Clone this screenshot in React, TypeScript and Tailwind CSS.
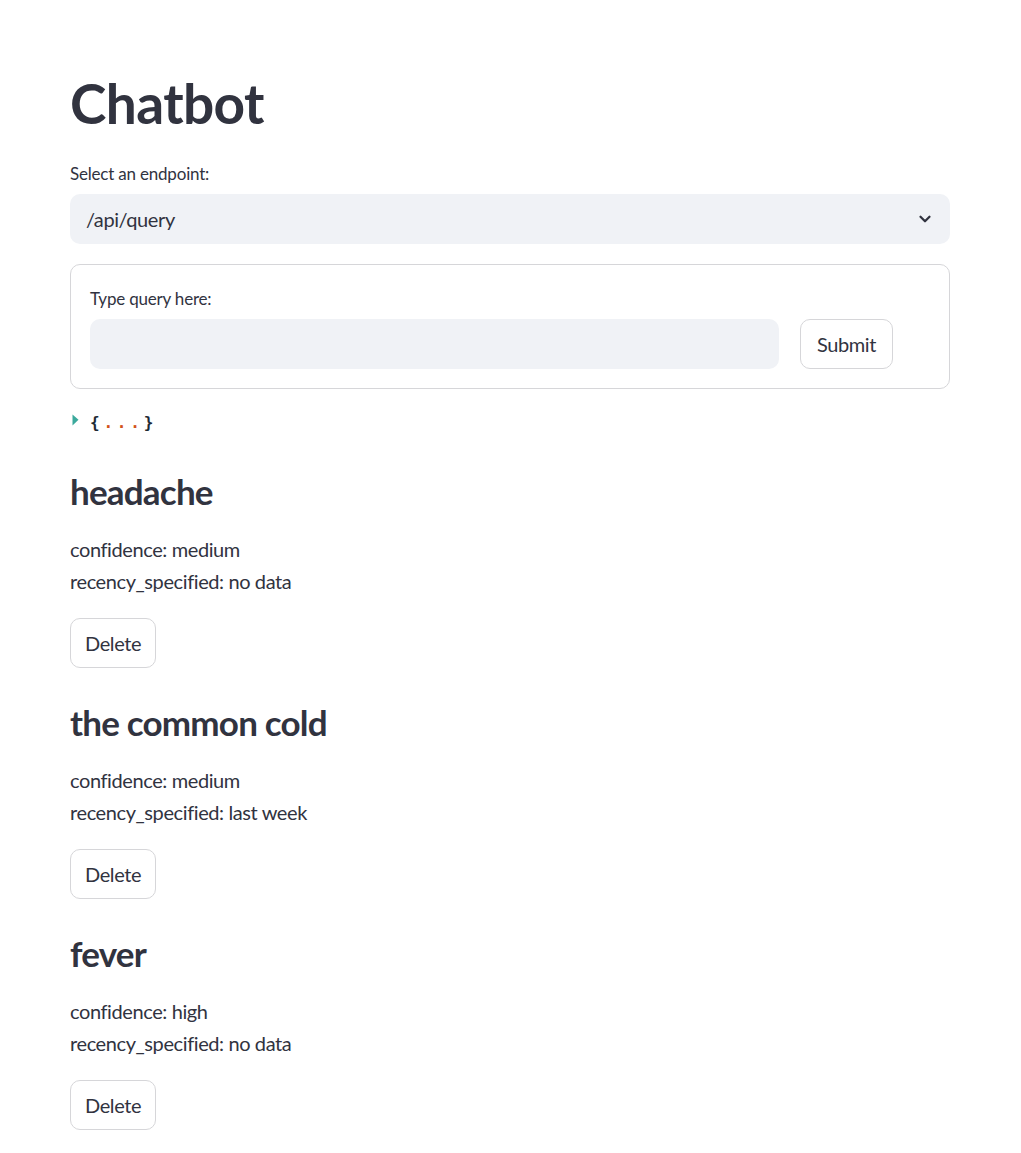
import { ChevronDown } from 'lucide-react';

interface Condition {
    name: string;
    confidence: string;
    recency: string;
}

const conditions: Condition[] = [
    { name: 'headache', confidence: 'medium', recency: 'no data' },
    { name: 'the common cold', confidence: 'medium', recency: 'last week' },
    { name: 'fever', confidence: 'high', recency: 'no data' },
];

const font = { fontFamily: 'Lato, "Noto Sans", sans-serif' };

function SmallButton({ label, wide }: { label: string; wide?: boolean }) {
    return (
        <button
            className={`h-[50px] ${wide ? 'px-[16px]' : 'px-[14px]'} bg-white border border-[#d6d6d9] rounded-[10px] text-[20px] tracking-[-0.4px] text-[#31333f] leading-none`}
        >
            {label}
        </button>
    );
}

export default function App() {
    return (
        <div className="min-h-screen bg-white text-[#31333f]" style={font}>
            <div className="w-[880px] ml-[70px] pt-[70px] pb-[23px]">
                {/* Title */}
                <h1 className="text-[55px] font-bold leading-[66px] tracking-[-0.6px]">Chatbot</h1>

                {/* Endpoint select */}
                <div className="mt-[26px]">
                    <label className="block text-[17px] leading-[24px] mb-[8px] tracking-[-0.2px]">Select an endpoint:</label>
                    <div className="h-[50px] bg-[#f0f2f6] rounded-[10px] flex items-center justify-between pl-[16px] pr-[16px]">
                        <span className="text-[20px] tracking-[-0.4px]">/api/query</span>
                        <ChevronDown className="h-[18px] w-[18px] text-[#31333f]" strokeWidth={3} />
                    </div>
                </div>

                {/* Query form */}
                <div className="mt-[20px] border border-[#d6d6d9] rounded-[10px] px-[19px] pt-[22px] pb-[19px]">
                    <div className="flex items-end gap-[21px]">
                        <div className="flex-1">
                            <label className="block text-[17px] leading-[24px] mb-[8px] tracking-[-0.2px]">Type query here:</label>
                            <div className="h-[50px] bg-[#f0f2f6] rounded-[10px]" />
                        </div>
                        <div className="w-[130px]">
                            <SmallButton label="Submit" wide />
                        </div>
                    </div>
                </div>

                {/* JSON viewer collapsed */}
                <div className="mt-[22px] flex items-center h-[24px]">
                    <svg width="8" height="13" viewBox="0 0 8 13" className="ml-[2px] -mt-[6px]">
                        <path d="M0.5 0.5 L6.5 5.8 L0.5 11.5 Z" fill="#3ba99c" />
                    </svg>
                    <span className="ml-[10px] text-[16px] tracking-[3.8px] font-bold" style={{ fontFamily: '"DejaVu Sans Mono", monospace' }}>
                        <span className="text-[#1d2a35]">{'{'}</span>
                        <span className="text-[#d2541b]">...</span>
                        <span className="text-[#1d2a35]">{'}'}</span>
                    </span>
                </div>

                {/* Conditions */}
                <div className="mt-[35px]">
                    {conditions.map((c, i) => (
                        <div key={c.name} className={i > 0 ? 'mt-[33px]' : ''}>
                            <h3 className="text-[35px] font-bold leading-[42px] tracking-[-0.8px]">{c.name}</h3>
                            <div className="mt-[21px] text-[20px] leading-[32px] tracking-[-0.4px]">
                                <p>confidence: {c.confidence}</p>
                                <p>recency_specified: {c.recency}</p>
                            </div>
                            <div className="mt-[21px]">
                                <SmallButton label="Delete" />
                            </div>
                        </div>
                    ))}
                </div>
            </div>
        </div>
    );
}
